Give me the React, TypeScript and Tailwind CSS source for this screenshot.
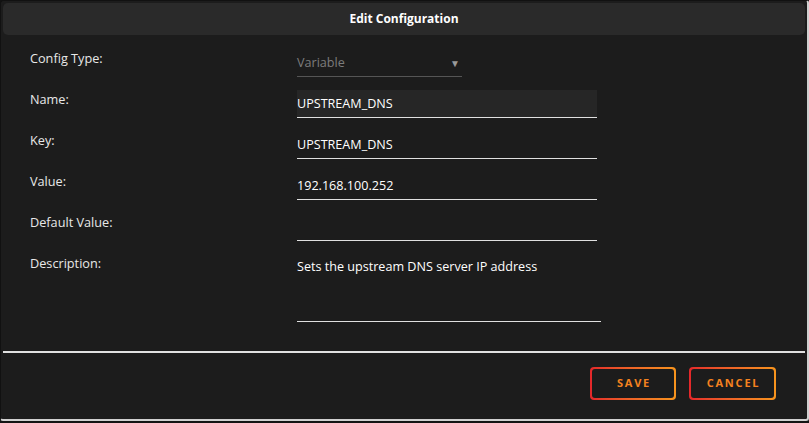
import React from "react";

const font = { fontFamily: '"Open Sans", "Noto Sans", sans-serif' };

function Row({ label, children, tall }: { label: string; children: React.ReactNode; tall?: boolean }) {
  return (
    <div className={`flex ${tall ? "h-[81px]" : "h-[41px]"}`}>
      <div className="w-[296px] shrink-0 pl-[29px] pt-[14px] text-[12.7px] leading-[16px] text-[#e8e8e8]">{label}</div>
      {children}
    </div>
  );
}

function GradButton({ label, w }: { label: string; w: string }) {
  return (
    <div className={`rounded-[4px] bg-gradient-to-r from-[#e4262a] to-[#f7941d] p-[2px] ${w} h-[33px]`}>
      <div className="flex h-full w-full items-center justify-center rounded-[3px] bg-[#1c1c1c] pl-[2px] text-[11px] font-bold tracking-[1.8px] text-[#f5821f]">
        {label}
      </div>
    </div>
  );
}

export default function App() {
  return (
    <div className="h-[423px] w-[809px] bg-[#141414]" style={font}>
      <div className="flex h-[421px] w-[809px] flex-col rounded-[3px] border-b-2 border-r-2 border-l border-t border-b-[#d0d0d0] border-r-[#d0d0d0] border-l-[#111] border-t-[#111] bg-[#1c1c1c]">
        <div className="mx-[2px] mt-[2px] flex h-[32px] items-center justify-center rounded-[5px] bg-[#2a2a2a] text-[12px] font-bold text-white">
          Edit Configuration
        </div>
        <div className="h-[1px]" />
        <Row label="Config Type:">
          <div className="mt-[13px] flex h-[28px] w-[165px] items-center justify-between border-b border-[#555] pt-[2px] text-[12.6px] text-[#7c7c7c]">
            <span>Variable</span>
            <span className="mr-[2px] text-[10px] text-[#9a9a9a]">▼</span>
          </div>
        </Row>
        <Row label="Name:">
          <div className="mt-[13px] flex h-[28px] w-[300px] items-center border-b border-[#e0e0e0] bg-[#262626] pt-[2px] text-[12.6px] text-white">
            UPSTREAM_DNS
          </div>
        </Row>
        <Row label="Key:">
          <div className="mt-[13px] flex h-[28px] w-[300px] items-center border-b border-[#e0e0e0] pt-[2px] text-[12.6px] text-white">
            UPSTREAM_DNS
          </div>
        </Row>
        <Row label="Value:">
          <div className="mt-[13px] flex h-[28px] w-[300px] items-center border-b border-[#e0e0e0] pt-[2px] text-[12.6px] text-white">
            192.168.100.252
          </div>
        </Row>
        <Row label="Default Value:">
          <div className="mt-[13px] h-[28px] w-[300px] border-b border-[#e0e0e0]" />
        </Row>
        <Row label="Description:" tall>
          <div className="mt-[13px] h-[68px] w-[304px] border-b border-[#e0e0e0] pt-[5px] text-[12.6px] leading-[16px] text-white">
            Sets the upstream DNS server IP address
          </div>
        </Row>
        <div className="mx-[2px] mt-[29px] h-[2px] bg-[#e0e0e0]" />
        <div className="mt-[14px] flex justify-end gap-[13px] pr-[31px]">
          <GradButton label="SAVE" w="w-[86px]" />
          <GradButton label="CANCEL" w="w-[87px]" />
        </div>
      </div>
    </div>
  );
}
